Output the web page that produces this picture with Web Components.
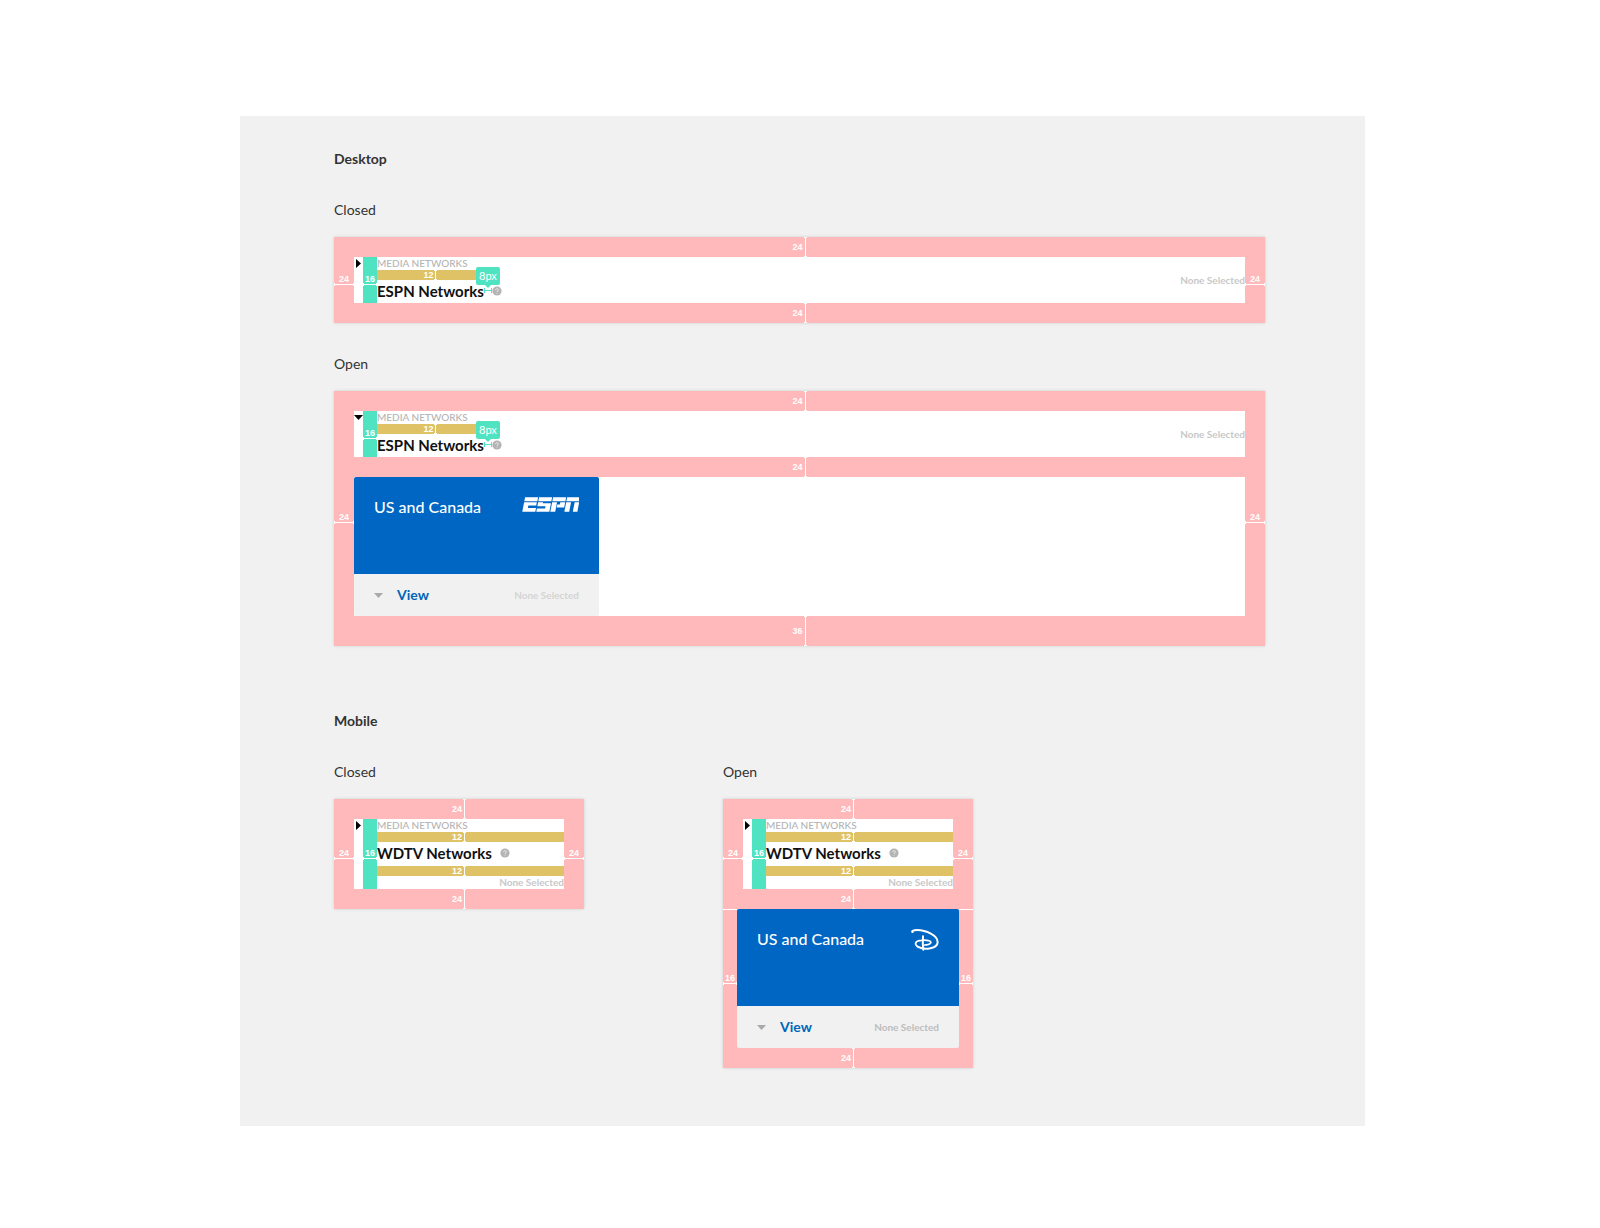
<!DOCTYPE html>
<html lang="en">
<head>
<meta charset="utf-8">
<title>Accordion spacing</title>
<style>
body {
  margin: 0;
  background: #fff;
  color: #333;
  font-family: Lato, "Open Sans", sans-serif;
}

.states {
  --state-gap: 0;
  display: grid;
  grid-template-columns: 250px 250px;
  align-items: start;
  gap: 139px;
}

.states region-card {
  --status: #bdbdbd;
}
</style>
</head>
<body>

<spec-board>
  <spec-section>
    <span slot="title">Desktop</span>
    <spec-state label="Closed">
      <spec-frame>
        <network-header name="ESPN Networks" tip></network-header>
      </spec-frame>
    </spec-state>
    <spec-state label="Open">
      <spec-frame bottom="36">
        <network-header name="ESPN Networks" tip open></network-header>
        <spec-mark slot="body" value="24"></spec-mark>
        <region-card slot="body">
          <brand-logo name="espn" slot="logo"></brand-logo>
        </region-card>
      </spec-frame>
    </spec-state>
  </spec-section>

  <spec-section>
    <span slot="title">Mobile</span>
    <div class="states">
      <spec-state label="Closed">
        <spec-frame>
          <network-header name="WDTV Networks" stacked></network-header>
        </spec-frame>
      </spec-state>
      <spec-state label="Open">
        <spec-frame>
          <network-header name="WDTV Networks" stacked></network-header>
        </spec-frame>
        <spec-inset>
          <region-card>
            <brand-logo name="disney" slot="logo"></brand-logo>
          </region-card>
        </spec-inset>
      </spec-state>
    </div>
  </spec-section>
</spec-board>

<script>
function define(name, html, setup) {
  const template = document.createElement("template");
  template.innerHTML = html;

  customElements.define(name, class extends HTMLElement {
    constructor() {
      super();
      this.attachShadow({ mode: "open" });
      this.shadowRoot.appendChild(template.content.cloneNode(true));
    }

    connectedCallback() {
      if (setup) setup(this, this.shadowRoot);
    }
  });
}

define("spec-board", `
<style>
:host {
  display: block;
  margin: 116px 235px 102px 240px;
  padding: 32px 100px 58px 94px;
  background: #f1f1f1;
}
</style>
<main><slot></slot></main>
`);

define("spec-section", `
<style>
:host {
  display: block;
}
:host(:not(:first-child)) {
  padding-top: 64px;
}
h2 {
  margin: 0 0 29px;
  font-size: 14px;
  line-height: 22px;
  font-weight: 700;
}
</style>
<section>
  <h2><slot name="title"></slot></h2>
  <slot></slot>
</section>
`);

define("spec-state", `
<style>
:host {
  display: block;
}
:host(:not(:first-of-type)) {
  margin-top: var(--state-gap, 30px);
}
h3 {
  margin: 0 0 16px;
  font-size: 14px;
  line-height: 22px;
  font-weight: 400;
}
.panel {
  box-shadow: 0 0 3px rgba(0, 0, 0, .15);
}
</style>
<h3></h3>
<div class="panel"><slot></slot></div>
`, (el, root) => {
  root.querySelector("h3").textContent = el.getAttribute("label");
});

// A measured gap: the value next to an I-beam that spans the gap.
define("spec-mark", `
<style>
:host {
  display: flex;
  justify-content: center;
  align-items: center;
  gap: 1px;
  height: 20px;
  box-sizing: border-box;
  background: #ffb9ba;
  color: #fff;
  font: 700 9px/8px "Liberation Sans", sans-serif;
}
:host([value="36"]) {
  height: 30px;
}
:host([value="12"]) {
  height: 10px;
  background: #e0c266;
}
:host([side]) {
  flex-direction: column;
  gap: 0;
  width: 20px;
  height: auto;
}
:host([side][value="16"]) {
  width: 14px;
}
:host([gutter]) {
  background: #50e3c2;
}
i {
  box-sizing: border-box;
  width: 3px;
  height: 100%;
  border: solid #fff;
  border-width: 1px 0;
  background: linear-gradient(#fff, #fff) center / 1px 100% no-repeat;
}
:host([side]) i {
  width: 100%;
  height: 3px;
  border-width: 0 1px;
  background-size: 100% 1px;
}
</style>
<span></span><i></i>
`, (el, root) => {
  root.querySelector("span").textContent = el.getAttribute("value");
});

define("spec-frame", `
<style>
:host {
  display: grid;
  grid-template-columns: 20px 1fr 20px;
  background: #ffb9ba;
}
.middle {
  display: flex;
  flex-direction: column;
  margin: 0 -20px;
}
.inner {
  margin: 0 20px;
}
::slotted(*) {
  background-color: #fff;
}
::slotted(spec-mark) {
  background-color: #ffb9ba;
}
/* the side marks must not cover the top and bottom bands */
spec-mark[side] {
  z-index: 1;
  background: none;
}
</style>
<spec-mark side value="24"></spec-mark>
<div class="middle">
  <spec-mark value="24"></spec-mark>
  <div class="inner">
    <slot></slot>
    <slot name="body"></slot>
  </div>
  <spec-mark id="bottom" value="24"></spec-mark>
</div>
<spec-mark side value="24"></spec-mark>
`, (el, root) => {
  if (el.hasAttribute("bottom")) {
    const mark = document.createElement("spec-mark");
    mark.setAttribute("value", el.getAttribute("bottom"));
    root.getElementById("bottom").replaceWith(mark);
  }
});

// Body of the mobile panel, where the card takes narrower side gaps.
define("spec-inset", `
<style>
:host {
  display: block;
  background: #ffb9ba;
}
.row {
  display: grid;
  grid-template-columns: 14px 1fr 14px;
}
.row spec-mark {
  border-top: 1px solid #fff;
}
</style>
<div class="row">
  <spec-mark side value="16"></spec-mark>
  <slot></slot>
  <spec-mark side value="16"></spec-mark>
</div>
<spec-mark value="24"></spec-mark>
`);

define("help-icon", `
<style>
:host {
  display: block;
  flex: none;
  width: 10px;
  height: 10px;
}
svg {
  display: block;
}
</style>
<svg width="10" height="10" viewBox="0 0 10 10" aria-hidden="true">
  <circle cx="5" cy="5" r="4.6" fill="#b4b4b4"/>
  <path d="M3.6 4.1C3.6 2.2 6.5 2.3 6.4 4C6.3 5 5 4.9 5 6M5 6.9V7.7" fill="none" stroke="#f4f4f4" stroke-width=".8"/>
</svg>
`);

define("network-header", `
<style>
:host {
  display: grid;
  grid-template-columns: 9px 14px 1fr auto;
  align-items: stretch;
  background: #fff;
}
.toggle {
  align-self: start;
  display: flex;
  justify-content: center;
  align-items: center;
  width: 9px;
  height: 13px;
  padding: 0;
  border: 0;
  background: none;
}
.down {
  display: none;
}
:host([open]) .down {
  display: block;
}
:host([open]) .right {
  display: none;
}
.eyebrow {
  margin: 0;
  color: #b4b4b4;
  font-size: 10px;
  line-height: 13px;
  font-weight: 500;
}
.names {
  justify-self: start;
}
.name {
  display: flex;
  align-items: center;
  box-sizing: border-box;
  height: 23px;
  padding-bottom: 2px;
}
h4 {
  margin: 0;
  color: #111;
  font-size: 15px;
  line-height: 20px;
  font-weight: 700;
  white-space: nowrap;
}
:host([tip]) .gap {
  position: relative;
  box-sizing: border-box;
  width: 8px;
  height: 5px;
  border: solid #50e3c2;
  border-width: 0 1px;
  background: linear-gradient(#50e3c2, #50e3c2) center / 100% 1px no-repeat;
}
.tip {
  position: absolute;
  left: 50%;
  bottom: 8px;
  width: 24px;
  margin-left: -12px;
  border-radius: 2px;
  background: #50e3c2;
  color: #fff;
  font-size: 11px;
  line-height: 18px;
  text-align: center;
}
.tip::after {
  content: "";
  position: absolute;
  top: 100%;
  left: 9px;
  border: 3px solid transparent;
  border-top-color: #50e3c2;
  border-bottom: 0;
}
:host([tip]) .bar {
  margin-right: 18px;
}
.status {
  align-self: center;
  color: #c8c8c8;
  font-size: 10px;
  line-height: 13px;
  font-weight: 700;
}
:host([stacked]) {
  grid-template-columns: 9px 14px 1fr;
}
:host([stacked]) .toggle,
:host([stacked]) .gutter {
  grid-row: 1 / 3;
}
:host([stacked]) .gutter {
  grid-column: 2;
}
:host([stacked]) .names {
  justify-self: stretch;
}
:host([stacked]) .name {
  gap: 8px;
  height: 24px;
}
:host([stacked]) .bar,
.lower {
  padding-right: 23px;
}
.lower {
  display: none;
}
:host([stacked]) .lower {
  display: flex;
}
:host([stacked]) .status {
  grid-column: 3;
  text-align: right;
}
</style>
<button class="toggle" type="button" aria-label="Toggle networks">
  <svg class="right" width="5" height="9" viewBox="0 0 5 9"><path d="M0 0L5 4.5L0 9Z" fill="#000"/></svg>
  <svg class="down" width="9" height="5" viewBox="0 0 9 5"><path d="M0 0H9L4.5 5Z" fill="#000"/></svg>
</button>
<spec-mark class="gutter" side gutter value="16"></spec-mark>
<div class="names">
  <p class="eyebrow">MEDIA NETWORKS</p>
  <spec-mark class="bar" value="12"></spec-mark>
  <div class="name">
    <h4></h4>
    <div class="gap"><div class="tip">8px</div></div>
    <help-icon></help-icon>
  </div>
  <spec-mark class="lower" value="12"></spec-mark>
</div>
<div class="status">None Selected</div>
`, (el, root) => {
  root.querySelector("h4").textContent = el.getAttribute("name");
  if (!el.hasAttribute("tip")) root.querySelector(".gap").remove();
});

define("region-card", `
<style>
:host {
  display: block;
}
article {
  max-width: 245px;
  border-radius: 2px;
  background: #f1f1f1;
}
.top {
  display: flex;
  justify-content: space-between;
  align-items: flex-start;
  box-sizing: border-box;
  height: 97px;
  padding: 20px;
  border-radius: 2px 2px 0 0;
  background: #0066c3;
}
h4 {
  margin: 0;
  color: #fff;
  font-size: 16px;
  line-height: 20px;
  font-weight: 500;
}
.foot {
  display: flex;
  justify-content: space-between;
  align-items: center;
  height: 42px;
  padding: 0 20px;
}
button {
  display: flex;
  align-items: center;
  gap: 14px;
  padding: 0;
  border: 0;
  background: none;
  color: #0066b8;
  font: 700 14px/22px Lato, "Open Sans", sans-serif;
}
span {
  color: var(--status, #d4d4d4);
  font-size: 10px;
  line-height: 13px;
  font-weight: 700;
}
</style>
<article>
  <div class="top">
    <h4>US and Canada</h4>
    <slot name="logo"></slot>
  </div>
  <div class="foot">
    <button type="button">
      <svg width="9" height="5" viewBox="0 0 9 5" aria-hidden="true"><path d="M0 0H9L4.5 5Z" fill="#aaa"/></svg>
      View
    </button>
    <span>None Selected</span>
  </div>
</article>
`);

const logos = {
  espn: `
<svg width="57" height="15" viewBox="0 0 174 46" fill="#fff" role="img" aria-label="ESPN">
  <g transform="translate(9 1) skewX(-11)">
    <path d="M0 0H40V12H0ZM0 15H39V25H15V33H40V44H0Z"/>
    <path d="M43 0H83V12H43ZM43 15H58V18H83V44H43V34H68V27H43Z"/>
    <path d="M86 0H126V12H86ZM86 15H101V44H86ZM111 15H126V31H103V22H111Z"/>
    <path d="M129 0H169V12H129ZM129 15H144V44H129ZM155 15H169V44H155Z"/>
  </g>
</svg>`,
  disney: `
<svg width="28" height="22" viewBox="0 0 84 66" fill="none" stroke="#fff" stroke-linecap="round" role="img" aria-label="Disney">
  <path d="M5 9C0 8 6 3 18 3C46 3 80 20 80 39C80 58 42 66 20 53" stroke-width="6"/>
  <path d="M20 53C8 44 14 35 32 34C50 32 63 37 59 42C56 46 48 48 40 48" stroke-width="5"/>
  <path d="M36 22C35 36 35 50 37 62" stroke-width="6"/>
</svg>`
};

define("brand-logo", `
<style>
:host {
  display: block;
}
svg {
  display: block;
}
</style>
<div></div>
`, (el, root) => {
  root.querySelector("div").innerHTML = logos[el.getAttribute("name")];
});
</script>
</body>
</html>
